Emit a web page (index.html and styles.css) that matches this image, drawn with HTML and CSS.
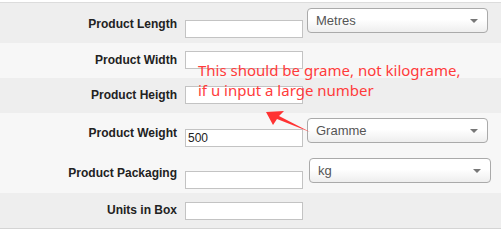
FILE: index.html
```html
<!DOCTYPE html>
<html lang="en">
<head>
    <meta charset="UTF-8">
    <title>product dimensions</title>
    <link rel="stylesheet" href="styles.css">
</head>
<body>
    <div class="form-table">
        <div class="row row-dark row-length">
            <label class="label">Product Length</label>
            <input class="field" type="text">
            <div class="unit-select">Metres<span class="caret"></span></div>
        </div>
        <div class="row row-light">
            <label class="label">Product Width</label>
            <input class="field" type="text">
        </div>
        <div class="row row-dark">
            <label class="label">Product Heigth</label>
            <input class="field" type="text">
        </div>
        <div class="row row-light row-weight">
            <label class="label">Product Weight</label>
            <input class="field" type="text" value="500">
            <div class="unit-select">Gramme<span class="caret"></span></div>
        </div>
        <div class="row row-light row-packaging">
            <label class="label">Product Packaging</label>
            <input class="field" type="text">
            <div class="unit-select">kg<span class="caret"></span></div>
        </div>
        <div class="row row-dark row-last">
            <label class="label">Units in Box</label>
            <input class="field" type="text">
        </div>

        <div class="note">This should be grame, not kilograme,<br>if u input a large number</div>
        <svg class="note-arrow" width="501" height="252" viewBox="0 0 501 252">
            <polygon points="266,112 284,111 279,116 310,132 277,119 273,125" fill="#f33"/>
        </svg>
    </div>
</body>
</html>
```

FILE: styles.css
```css
html,
body {
    margin: 0;
    padding: 0;
    background: #fff;
    width: 100%;
    overflow: hidden;
}

.form-table {
    position: relative;
    margin-top: 2px;
    border-top: 1px solid #dcdcdc;
    border-bottom: 1px solid #d4d4d4;
    font-family: "Liberation Sans", Arial, sans-serif;
}

.row {
    display: flex;
    align-items: flex-start;
    height: 35px;
}

.row-dark {
    background-color: #eeeeee;
}

.row-light {
    background-color: #f7f7f7;
}

.label {
    width: 177px;
    text-align: right;
    font-size: 12px;
    font-weight: bold;
    line-height: 14px;
    color: #222;
    margin-top: 10px;
}

.field {
    box-sizing: border-box;
    width: 118px;
    height: 18px;
    margin: 8px 0 0 8px;
    padding: 0 2px;
    border: 1px solid #c3c3c3;
    background: #fff;
    font-family: "Liberation Sans", Arial, sans-serif;
    font-size: 12px;
    color: #222;
    outline: none;
}

.unit-select {
    position: relative;
    box-sizing: border-box;
    width: 181px;
    height: 25px;
    margin: 5px 0 0 4px;
    padding-left: 8px;
    line-height: 23px;
    border: 1px solid #aaa;
    border-radius: 4px;
    background: linear-gradient(#ffffff, #ffffff 45%, #eeeeee);
    font-size: 13px;
    color: #555;
}

.caret {
    position: absolute;
    right: 9px;
    top: 10px;
    width: 0;
    height: 0;
    border-left: 4px solid transparent;
    border-right: 4px solid transparent;
    border-top: 4px solid #777;
}

.row-length {
    height: 40px;
}
.row-length .label {
    margin-top: 14px;
}
.row-length .field {
    margin-top: 17px;
}

.row-weight {
    height: 45px;
}
.row-weight .label {
    margin-top: 13px;
}
.row-weight .field {
    margin-top: 16px;
}

.row-packaging .label {
    margin-top: 8px;
}
.row-packaging .field {
    margin-top: 13px;
}
.row-packaging .unit-select {
    margin: 0 0 0 6px;
    width: 182px;
}

.row-last .field {
    margin-top: 9px;
}

.note {
    position: absolute;
    left: 198px;
    top: 57px;
    font-family: "Noto Sans", sans-serif;
    font-size: 15px;
    line-height: 20px;
    color: #ff3b3b;
}

.note-arrow {
    position: absolute;
    left: 0;
    top: -3px;
}
```
